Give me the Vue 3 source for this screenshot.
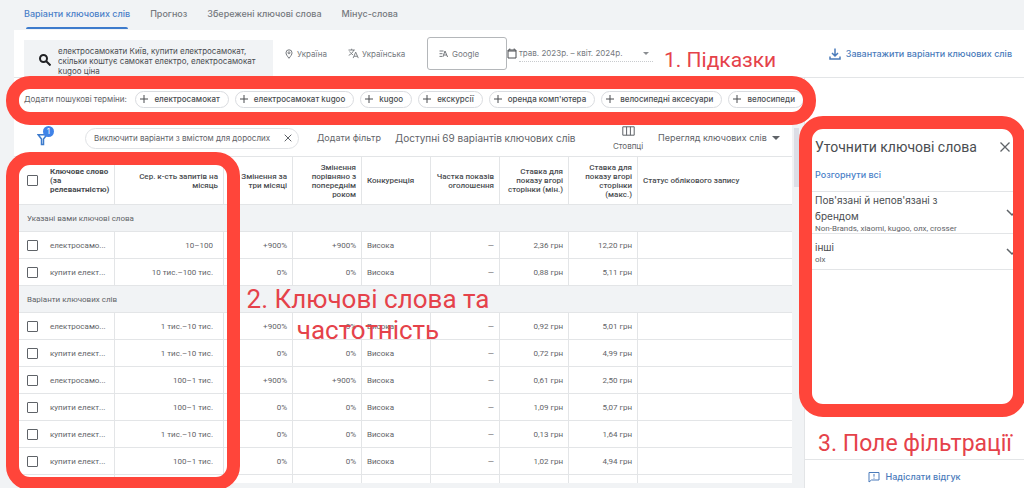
<script setup>
import { ref } from 'vue'

const tabs = ['Варіанти ключових слів', 'Прогноз', 'Збережені ключові слова', 'Мінус-слова']
const activeTab = ref(0)
const query = ref('електросамокати Київ, купити електросамокат, скільки коштує самокат електро, електросамокат kugoo ціна')
const suggestions = ['електросамокат', 'електросамокат kugoo', 'kugoo', 'екскурсії', "оренда комп'ютера", 'велосипедні аксесуари', 'велосипеди']

const groups = [
  {
    title: 'Указані вами ключові слова',
    rows: [
      ['електросамо...', '10–100', '+900%', '+900%', '2,36 грн', '12,20 грн'],
      ['купити елект...', '10 тис.–100 тис.', '0%', '0%', '0,88 грн', '5,11 грн'],
    ],
  },
  {
    title: 'Варіанти ключових слів',
    rows: [
      ['електросамо...', '1 тис.–10 тис.', '+900%', '0%', '0,92 грн', '5,01 грн'],
      ['купити елект...', '1 тис.–10 тис.', '0%', '0%', '0,72 грн', '4,99 грн'],
      ['електросамо...', '100–1 тис.', '+900%', '+900%', '0,61 грн', '2,50 грн'],
      ['купити елект...', '100–1 тис.', '0%', '0%', '1,09 грн', '5,07 грн'],
      ['купити елект...', '1 тис.–10 тис.', '0%', '0%', '0,13 грн', '1,64 грн'],
      ['купити елект...', '100–1 тис.', '0%', '0%', '1,02 грн', '4,94 грн'],
    ],
  },
]

const refinements = [
  { title: "Пов'язані й непов'язані з брендом", terms: 'Non-Brands, xiaomi, kugoo, олх, crosser' },
  { title: 'інші', terms: 'olx' },
]
</script>

<template>
  <div class="page">
    <nav class="tabs">
      <button v-for="(tab, i) in tabs" :key="tab" class="tab" :class="{ active: i === activeTab }" @click="activeTab = i">{{ tab }}</button>
    </nav>

    <header class="toolbar">
      <label class="search">
        <svg class="search-icon" viewBox="0 0 12 12"><circle cx="4.5" cy="4.5" r="3.5" /><path d="M7 7l4.500 4.500" /></svg>
        <textarea v-model="query" aria-label="Ключові слова" rows="3"></textarea>
      </label>
      <button class="setting place">
        <svg class="pin" viewBox="0 0 8 10"><path d="M4 9.300C2.200 7 1 5.400 1 3.800a3 3 0 0 1 6 0C7 5.400 5.800 7 4 9.300z" /><circle cx="4" cy="3.800" r="1" /></svg>
        Україна
      </button>
      <button class="setting lang">
        <svg class="translate" viewBox="0 0 12 12"><path d="M.5 2.200h7M4 .8v1.400M6.200 2.200C5.500 4.600 3.400 6.800.8 8M1.800 3.800C2.800 5.600 4 6.600 5.400 7.400M5.600 11l2.800-6.500L11.200 11M6.600 9h3.600" /></svg>
        Українська
      </button>
      <button class="setting network">
        <svg class="network-icon" viewBox="0 0 10 8"><path d="M.5 1h4M.5 3.700h3M.5 6.400h2.500M3.800 7l2.200-6 2.600 6M4.800 5h3" /></svg>
        Google
      </button>
      <button class="setting dates">
        <svg class="calendar" viewBox="0 0 10 11"><path d="M1 2h8v8H1zM1 3h8M2.800.5V2M7.200.5V2" /></svg>
        <span class="date-value">трав. 2023р. – квіт. 2024р.<i class="caret"></i></span>
      </button>
      <a class="download" href="#">
        <svg viewBox="0 0 12 12"><path d="M6 .5v7M3 5l3 3 3-3M1 8.500V11h10V8.500" /></svg>
        Завантажити варіанти ключових слів
      </a>
    </header>

    <div class="body">
      <main class="main">
        <div class="suggestions">
          <span class="suggest-label">Додати пошукові терміни:</span>
          <button v-for="s in suggestions" :key="s" class="chip">
            <svg viewBox="0 0 8 8"><path d="M4 0v8M0 4h8" /></svg>{{ s }}
          </button>
        </div>

        <div class="work">
          <section class="list">
            <div class="filters">
              <button class="funnel" aria-label="Фільтри">
                <svg viewBox="0 0 11 13"><path d="M1.200 1.800h8.600L6.500 6v5.500h-2V6z" /></svg>
                <span class="badge">1</span>
              </button>
              <span class="filter-chip">
                Виключити варіанти з вмістом для дорослих
                <button class="remove" aria-label="Вилучити"><svg viewBox="0 0 8 8"><path d="M.7.7l6.600 6.600M7.300.7L.7 7.300" /></svg></button>
              </span>
              <button class="add-filter">Додати фільтр</button>
              <span class="available">Доступні 69 варіантів ключових слів</span>
              <button class="columns">
                <svg viewBox="0 0 13 10"><path d="M.8.8h11.400v8.400H.8zM4.600.8v8.400M8.400.8v8.400" /></svg>
                Стовпці
              </button>
              <button class="view">Перегляд ключових слів<i class="caret dark"></i></button>
            </div>

            <div class="table-wrap">
              <table>
                <colgroup>
                  <col class="c-check" /><col class="c-word" /><col class="c-volume" /><col class="c-num" /><col class="c-num" />
                  <col class="c-num" /><col class="c-num" /><col class="c-num" /><col class="c-num" /><col />
                </colgroup>
                <thead>
                  <tr>
                    <th class="check"><input type="checkbox" aria-label="Вибрати всі" /></th>
                    <th class="word strong">Ключове слово (за релевантністю)</th>
                    <th class="num volume-head">Сер. к-сть запитів на місяць</th>
                    <th class="num">Змінення за три місяці</th>
                    <th class="num">Змінення порівняно з попереднім роком</th>
                    <th>Конкуренція</th>
                    <th class="num">Частка показів оголошення</th>
                    <th class="num">Ставка для показу вгорі сторінки (мін.)</th>
                    <th class="num">Ставка для показу вгорі сторінки (макс.)</th>
                    <th>Статус облікового запису</th>
                  </tr>
                </thead>
                <tbody v-for="g in groups" :key="g.title">
                  <tr class="group"><th colspan="10">{{ g.title }}</th></tr>
                  <tr v-for="(r, i) in g.rows" :key="i">
                    <td class="check"><input type="checkbox" :aria-label="r[0]" /></td>
                    <td class="word">{{ r[0] }}</td>
                    <td class="num volume">{{ r[1] }}</td>
                    <td class="num">{{ r[2] }}</td>
                    <td class="num">{{ r[3] }}</td>
                    <td>Висока</td>
                    <td class="num">—</td>
                    <td class="num">{{ r[4] }}</td>
                    <td class="num">{{ r[5] }}</td>
                    <td></td>
                  </tr>
                </tbody>
                <tbody>
                  <tr><td class="check"></td><td v-for="n in 9" :key="n"></td></tr>
                </tbody>
              </table>
            </div>
          </section>
          <div class="scrollbar"><div class="thumb"></div></div>
        </div>
      </main>

      <aside class="refine">
        <div class="refine-head">
          <h2>Уточнити ключові слова</h2>
          <button class="close" aria-label="Закрити"><svg viewBox="0 0 8 8"><path d="M.4.4l7.200 7.200M7.600.4L.4 7.600" /></svg></button>
        </div>
        <a class="expand" href="#">Розгорнути всі</a>
        <button v-for="r in refinements" :key="r.title" class="refinement">
          <span class="refine-text">
            <span class="refine-title">{{ r.title }}</span>
            <span class="refine-terms">{{ r.terms }}</span>
          </span>
          <svg viewBox="0 0 12 8"><path d="M1 1l5 5 5-5" /></svg>
        </button>
        <div class="feedback">
          <a href="#">
            <svg viewBox="0 0 12 12"><path d="M1 1.500h10v7.500H3.500L1 11zM6 3v2.700M6 6.700v1" /></svg>
            Надіслати відгук
          </a>
        </div>
      </aside>
    </div>

    <div class="frame frame-hints"></div>
    <div class="frame frame-words"></div>
    <div class="frame frame-refine"></div>
    <p class="note note-hints">1. Підказки</p>
    <p class="note note-words">2. Ключові слова та частотність</p>
    <p class="note note-refine">3. Поле фільтрації</p>
  </div>
</template>

<style>
body {
  margin: 0;
}
</style>

<style scoped>
.page {
  position: relative;
  display: flex;
  flex-direction: column;
  height: 100vh;
  overflow: hidden;
  background: #f1f3f5;
  color: #5f6368;
  font: 8px/10px Inter, Roboto, "Liberation Sans", sans-serif;
}
* {
  box-sizing: border-box;
}
button,
textarea {
  margin: 0;
  padding: 0;
  border: 0;
  background: none;
  color: inherit;
  font: inherit;
}
a {
  text-decoration: none;
}
svg {
  flex: none;
  fill: none;
  stroke: currentColor;
}
.tabs {
  display: flex;
  gap: 20px;
  flex: none;
  height: 30px;
  padding-left: 24px;
}
.tab {
  position: relative;
  padding-bottom: 3px;
  color: #75797e;
  font-size: 9px;
  font-weight: 500;
}
.tab.active {
  color: #4a7fc8;
}
.tab.active::after {
  content: "";
  position: absolute;
  left: 2px;
  right: 2px;
  bottom: 1px;
  height: 2px;
  border-radius: 2px 2px 0 0;
  background: #3d7bcc;
}
.toolbar {
  display: grid;
  grid-template-columns: 249px 65px 89px 80px 146px 1fr;
  align-items: start;
  flex: none;
  height: 48px;
  margin-left: 14px;
  padding: 7px 12px 0 10px;
  background: #fff;
  border-bottom: 1px solid #e3e5e7;
}
.search {
  display: flex;
  height: 37px;
  margin-top: 3px;
  padding: 6px 0 0 15px;
  gap: 7px;
  background: #f1f3f5;
  overflow: hidden;
}
.search-icon {
  width: 12px;
  height: 12px;
  margin-top: 8px;
  color: #202124;
  stroke-width: 2;
}
textarea {
  flex: 1;
  height: 31px;
  padding-right: 8px;
  color: #4a4d51;
  resize: none;
  overflow: hidden;
  outline: none;
}
.setting {
  display: flex;
  align-items: center;
  height: 33px;
  white-space: nowrap;
  color: #75797e;
}
.place {
  gap: 4px;
  padding-left: 12px;
}
.pin {
  width: 8px;
  height: 10px;
}
.lang {
  gap: 3px;
  padding-left: 10px;
}
.translate {
  width: 11px;
  height: 11px;
}
.network {
  gap: 3px;
  padding-left: 11px;
  border: 1px solid #b4b7ba;
  border-radius: 3px;
}
.network-icon {
  width: 10px;
  height: 8px;
}
.dates {
  gap: 2px;
}
.calendar {
  width: 10px;
  height: 11px;
  color: #4a4d51;
}
.date-value {
  display: flex;
  align-items: center;
  justify-content: space-between;
  flex: 1;
  height: 16px;
  padding-right: 4px;
  border-bottom: 1px dotted #c8cbce;
}
.caret {
  border: 3px solid transparent;
  border-top-color: #8a8d91;
  border-bottom: 0;
}
.download {
  display: flex;
  align-items: center;
  justify-self: end;
  gap: 5px;
  height: 33px;
  color: #4a7bbb;
  font-size: 9px;
  font-weight: 500;
  white-space: nowrap;
}
.download svg {
  width: 12px;
  height: 12px;
  stroke-width: 1.5;
}
.body {
  display: grid;
  grid-template-columns: minmax(0, 1fr) 220px;
  flex: 1;
  min-height: 0;
}
.main {
  display: flex;
  flex-direction: column;
  min-height: 0;
  margin-left: 14px;
}
.suggestions {
  display: flex;
  align-items: center;
  gap: 6px;
  flex: none;
  height: 42px;
  padding-left: 10px;
  background: #fff;
  white-space: nowrap;
}
.suggest-label {
  width: 107px;
}
.chip {
  display: flex;
  align-items: center;
  gap: 6px;
  height: 17px;
  padding: 0 8px 0 4px;
  border: 1px solid #dadce0;
  border-radius: 9px;
  color: #4a4d51;
  font-weight: 500;
}
.chip svg {
  width: 8px;
  height: 8px;
}
.work {
  display: flex;
  flex: 1;
  min-height: 0;
}
.list {
  display: flex;
  flex-direction: column;
  flex: 1;
  min-width: 0;
  margin-bottom: 5px;
  background: #fff;
}
.filters {
  display: flex;
  align-items: center;
  flex: none;
  height: 36px;
  padding: 0 12px 0 23px;
  white-space: nowrap;
  font-size: 9px;
}
.filters > * {
  flex: none;
}
.funnel {
  position: relative;
  width: 18px;
  height: 18px;
  color: #3d7bcc;
}
.funnel svg {
  display: block;
  width: 11px;
  height: 13px;
  margin-top: 3px;
  stroke-width: 1.5;
}
.badge {
  position: absolute;
  right: 1px;
  top: -3px;
  width: 11px;
  height: 11px;
  border-radius: 50%;
  background: #3f83e8;
  color: #fff;
  font-size: 8px;
  line-height: 11px;
}
.filter-chip {
  display: flex;
  align-items: center;
  justify-content: space-between;
  width: 214px;
  height: 21px;
  margin-left: 30px;
  padding: 0 6px 0 8px;
  border: 1px solid #e0e2e5;
  border-radius: 11px;
  font-size: 8px;
}
.remove svg {
  display: block;
  width: 8px;
  height: 8px;
}
.add-filter {
  width: 66px;
  margin-left: 18px;
  text-align: left;
}
.available {
  width: 186px;
  margin-left: 12px;
  font-size: 10px;
}
.columns {
  display: flex;
  flex-direction: column;
  align-items: center;
  gap: 5px;
  width: 32px;
  margin-left: 31px;
  font-size: 8px;
}
.columns svg {
  width: 13px;
  height: 10px;
}
.view {
  display: flex;
  align-items: center;
  justify-content: space-between;
  width: 122px;
  margin-left: auto;
}
.caret.dark {
  border-width: 4px 4px 0;
  border-top-color: #5f6368;
}
.table-wrap {
  flex: 1;
  min-height: 0;
  overflow: hidden;
}
table {
  width: 100%;
  table-layout: fixed;
  border-collapse: separate;
  border-spacing: 0;
  border-top: 1px solid #e3e5e7;
  font-family: Roboto, "Liberation Sans", sans-serif;
}
.c-check {
  width: 31px;
}
.c-word {
  width: 70px;
}
.c-volume {
  width: 109px;
}
.c-num {
  width: 69px;
}
th,
td {
  padding: 0 5px;
  border-right: 1px solid #e3e5e7;
  border-bottom: 1px solid #e3e5e7;
  text-align: left;
  font-weight: 400;
  line-height: 9px;
}
td {
  height: 27px;
  white-space: nowrap;
}
thead th {
  height: 48px;
  color: #4a4d51;
  font-weight: 500;
}
thead .strong {
  font-weight: 700;
}
.check {
  border-right: 0;
  padding: 0 0 0 13px;
}
.word {
  overflow: hidden;
}
th:last-child,
td:last-child {
  border-right: 0;
}
.num {
  text-align: right;
}
.volume {
  padding-right: 10px;
}
.volume-head {
  padding-left: 20px;
}
.group th {
  height: 27px;
  padding-left: 13px;
  background: #f1f3f5;
}
input[type="checkbox"] {
  display: block;
  appearance: none;
  width: 11px;
  height: 11px;
  margin: 0;
  border: 1px solid #5f6368;
  border-radius: 1px;
  background: #fff;
}
.scrollbar {
  width: 12px;
  padding: 8px 5px 0 2px;
}
.thumb {
  height: 59px;
  background: #dcdee6;
}
.refine {
  display: flex;
  flex-direction: column;
  border-left: 1px solid #e3e5e7;
  background: #fff;
}
.refine-head {
  display: flex;
  align-items: center;
  justify-content: space-between;
  padding: 60px 14px 0 10px;
}
h2 {
  margin: 0;
  color: #4a4d51;
  font-family: Roboto, "Liberation Sans", sans-serif;
  font-size: 14px;
  font-weight: 400;
  line-height: 18px;
  white-space: nowrap;
}
.close svg {
  display: block;
  width: 10px;
  height: 10px;
}
.expand {
  padding: 14px 10px 11px;
  border-bottom: 1px solid #e3e5e7;
  color: #4a7fc8;
  font-size: 9px;
  font-weight: 500;
}
.refinement {
  display: flex;
  align-items: center;
  justify-content: space-between;
  padding: 0 6px 0 10px;
  border-bottom: 1px solid #e3e5e7;
  text-align: left;
}
.refinement + .refinement {
  padding-top: 5px;
  padding-bottom: 5px;
}
.refine-text {
  width: 150px;
}
.refine-title,
.refine-terms {
  display: block;
}
.refine-title {
  color: #4a4d51;
  font-size: 10px;
  line-height: 16px;
}
.refine-terms {
  font-family: Roboto, "Liberation Sans", sans-serif;
  line-height: 9px;
}
.refinement svg {
  width: 12px;
  height: 8px;
  stroke-width: 1.5;
}
.feedback {
  display: flex;
  justify-content: center;
  margin-top: auto;
  padding: 11px 0 5px;
  border-top: 1px solid #e3e5e7;
}
.feedback a {
  display: flex;
  align-items: center;
  gap: 5px;
  color: #4a7bbb;
  font-size: 9px;
  font-weight: 500;
}
.feedback svg {
  width: 12px;
  height: 12px;
}
.frame {
  position: absolute;
  border: 13px solid #ff453a;
  border-radius: 24px;
  pointer-events: none;
}
.frame-hints {
  top: 76px;
  left: 6px;
  right: 208px;
  height: 49px;
}
.frame-words {
  top: 152px;
  bottom: -2px;
  left: 6px;
  width: 234px;
}
.frame-refine {
  top: 116px;
  right: -2px;
  bottom: 71px;
  width: 227px;
}
.note {
  position: absolute;
  margin: 0;
  color: #e5424a;
  font-family: Roboto, "Liberation Sans", sans-serif;
  font-size: 21px;
  line-height: 31px;
  text-align: center;
  pointer-events: none;
}
.note-hints {
  top: 45px;
  left: 664px;
}
.note-words {
  top: 284px;
  left: 236px;
  width: 264px;
  font-size: 26px;
}
.note-refine {
  top: 428px;
  right: 12px;
  font-size: 23px;
}
</style>
